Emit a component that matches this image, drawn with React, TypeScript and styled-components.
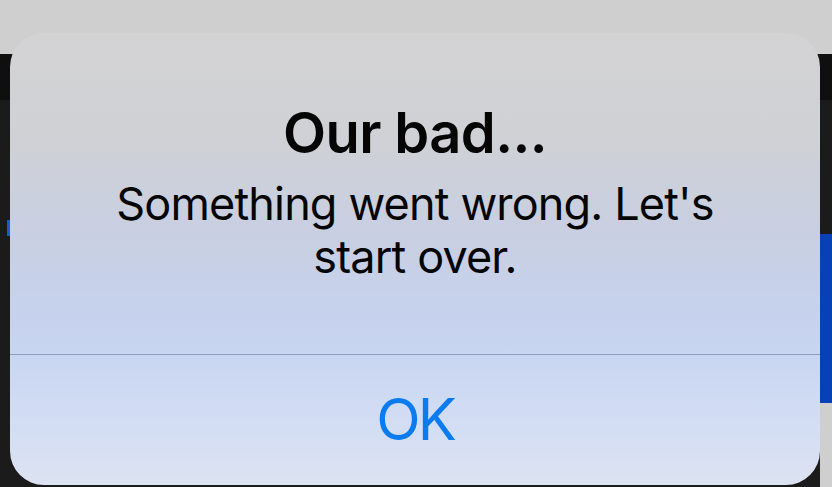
import React from "react";
import styled, { createGlobalStyle } from "styled-components";

const Global = createGlobalStyle`
  html, body { margin: 0; padding: 0; background: #cfcfcf; }
  #root { width: 832px; height: 487px; }
  * { box-sizing: border-box; }
`;

const Screen = styled.div`
  position: relative;
  width: 832px;
  height: 487px;
  overflow: hidden;
  background: #cfcfcf;
  font-family: Inter, "Noto Sans", "Liberation Sans", sans-serif;
`;

const Backdrop = styled.div`
  display: flex;
  flex-direction: column;
  width: 100%;
  height: 100%;
`;

const StatusArea = styled.div`
  height: 54px;
  flex: none;
  background: #cfcfcf;
`;

const AppArea = styled.div`
  flex: 1;
  display: flex;
`;

const Strip = styled.div<{ $w: number }>`
  width: ${(p) => p.$w}px;
  flex: none;
  display: flex;
  flex-direction: column;
`;

const Band = styled.div<{ $h?: number; $bg: string }>`
  ${(p) => (p.$h ? `height: ${p.$h}px; flex: none;` : "flex: 1;")}
  background: ${(p) => p.$bg};
`;

const Mark = styled.div`
  width: 4px;
  height: 16px;
  margin: 120px 0 0 7px;
  background: #1e56d8;
`;

const Center = styled.div`
  flex: 1;
  background: #1b1b1b;
`;

const Alert = styled.div`
  position: absolute;
  left: 10px;
  top: 33px;
  width: 810px;
  height: 452px;
  border-radius: 34px;
  overflow: hidden;
  display: flex;
  flex-direction: column;
  background: linear-gradient(
    180deg,
    #d3d3d4 0%,
    #d0d1d5 22%,
    #c8cfe2 45%,
    #c6d2ed 62%,
    #c9d6f1 72%,
    #d1dcf4 84%,
    #dce3f1 100%
  );
`;

const Body = styled.div`
  height: 321px;
  flex: none;
  display: flex;
  flex-direction: column;
  align-items: center;
  padding: 68px 90px 0;
  text-align: center;
  color: #050505;
`;

const Title = styled.h1`
  margin: 0;
  font-size: 56px;
  line-height: 64px;
  font-weight: 600;
  letter-spacing: -0.6px;
`;

const Message = styled.p`
  margin: 12px 0 0;
  font-size: 45px;
  line-height: 53px;
  font-weight: 400;
  letter-spacing: -0.85px;
`;

const Divider = styled.div`
  height: 1px;
  flex: none;
  background: #8e9dbc;
`;

const Button = styled.button`
  flex: 1;
  border: 0;
  background: transparent;
  display: flex;
  align-items: center;
  justify-content: center;
  font-family: inherit;
  font-size: 58px;
  font-weight: 400;
  letter-spacing: -3px;
  color: #0b7cf0;
  padding: 0 0 2px 0;
  cursor: pointer;
`;

export default function App() {
  return (
    <Screen>
      <Global />
      <Backdrop>
        <StatusArea />
        <AppArea>
          <Strip $w={11}>
            <Band $h={46} $bg="#0f0f0f" />
            <Band $bg="#1b1b1b">
              <Mark />
            </Band>
          </Strip>
          <Center />
          <Strip $w={12}>
            <Band $h={46} $bg="#0f0f0f" />
            <Band $h={134} $bg="#1b1b1b" />
            <Band $h={169} $bg="#0840b6" />
            <Band $bg="#cfcfcf" />
          </Strip>
        </AppArea>
      </Backdrop>
      <Alert role="alertdialog">
        <Body>
          <Title>Our bad...</Title>
          <Message>Something went wrong. Let's start over.</Message>
        </Body>
        <Divider />
        <Button>OK</Button>
      </Alert>
    </Screen>
  );
}
